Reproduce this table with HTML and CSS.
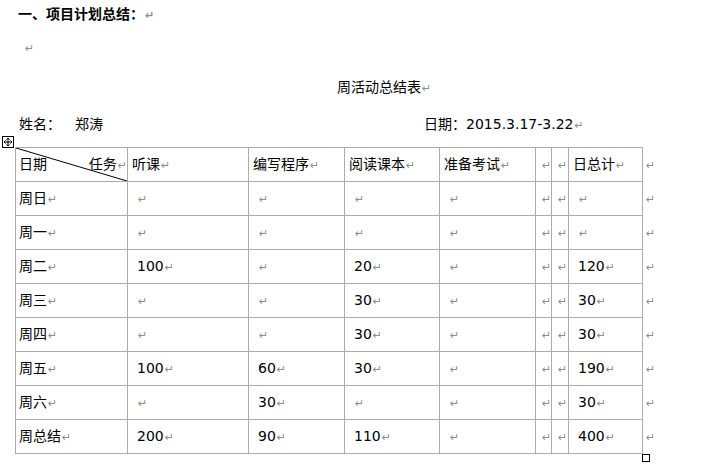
FILE: index.html
```html
<!DOCTYPE html>
<html lang="zh-CN">
<head>
<meta charset="utf-8">
<title>周活动总结表</title>
<link rel="stylesheet" href="styles.css">
</head>
<body>
<div class="page">
  <h1 class="heading">一、项目计划总结：<span class="pm">↵</span></h1>
  <p class="blank"><span class="pm">↵</span></p>
  <p class="caption">周活动总结表<span class="pm">↵</span></p>
  <div class="info">
    <span class="label">姓名：</span><span class="name">郑涛</span><span class="date">日期：2015.3.17-3.22<span class="pm">↵</span></span>
  </div>
  <div class="table-wrap">
    <svg class="move-handle" width="12" height="12" viewBox="0 0 12 12">
      <rect x="0.5" y="0.5" width="11" height="11" fill="#fff" stroke="#000"/>
      <path d="M2 6H10M6 2V10" stroke="#000" stroke-width="1"/>
      <path d="M2 6L3.5 4.5M2 6L3.5 7.5M10 6L8.5 4.5M10 6L8.5 7.5M6 2L4.5 3.5M6 2L7.5 3.5M6 10L4.5 8.5M6 10L7.5 8.5" stroke="#000" stroke-width="1" fill="none"/>
    </svg>
    <table class="grid">
      <colgroup>
        <col class="c1"><col class="c2"><col class="c3"><col class="c4"><col class="c5"><col class="c6"><col class="c7"><col class="c8"><col class="c9">
      </colgroup>
      <tr class="head">
        <td class="diag">
          <svg class="diag-line" viewBox="0 0 100 100" preserveAspectRatio="none"><line x1="0" y1="0" x2="100" y2="100" stroke="#000" stroke-width="1" vector-effect="non-scaling-stroke"/></svg>
          <div class="diag-text"><span>日期</span><span>任务<span class="pm">↵</span></span></div>
        </td>
        <td class="h">听课<span class="pm">↵</span></td>
        <td class="h">编写程序<span class="pm">↵</span></td>
        <td class="h">阅读课本<span class="pm">↵</span></td>
        <td class="h">准备考试<span class="pm">↵</span></td>
        <td class="n"><span class="pm">↵</span></td>
        <td class="n"><span class="pm">↵</span></td>
        <td class="h">日总计<span class="pm">↵</span></td>
        <td class="eor"><span class="pm">↵</span></td>
      </tr>
      <tr><td class="day">周日<span class="pm">↵</span></td><td><span class="pm">↵</span></td><td><span class="pm">↵</span></td><td><span class="pm">↵</span></td><td><span class="pm">↵</span></td><td class="n"><span class="pm">↵</span></td><td class="n"><span class="pm">↵</span></td><td><span class="pm">↵</span></td><td class="eor"><span class="pm">↵</span></td></tr>
      <tr><td class="day">周一<span class="pm">↵</span></td><td><span class="pm">↵</span></td><td><span class="pm">↵</span></td><td><span class="pm">↵</span></td><td><span class="pm">↵</span></td><td class="n"><span class="pm">↵</span></td><td class="n"><span class="pm">↵</span></td><td><span class="pm">↵</span></td><td class="eor"><span class="pm">↵</span></td></tr>
      <tr><td class="day">周二<span class="pm">↵</span></td><td>100<span class="pm">↵</span></td><td><span class="pm">↵</span></td><td>20<span class="pm">↵</span></td><td><span class="pm">↵</span></td><td class="n"><span class="pm">↵</span></td><td class="n"><span class="pm">↵</span></td><td>120<span class="pm">↵</span></td><td class="eor"><span class="pm">↵</span></td></tr>
      <tr><td class="day">周三<span class="pm">↵</span></td><td><span class="pm">↵</span></td><td><span class="pm">↵</span></td><td>30<span class="pm">↵</span></td><td><span class="pm">↵</span></td><td class="n"><span class="pm">↵</span></td><td class="n"><span class="pm">↵</span></td><td>30<span class="pm">↵</span></td><td class="eor"><span class="pm">↵</span></td></tr>
      <tr><td class="day">周四<span class="pm">↵</span></td><td><span class="pm">↵</span></td><td><span class="pm">↵</span></td><td>30<span class="pm">↵</span></td><td><span class="pm">↵</span></td><td class="n"><span class="pm">↵</span></td><td class="n"><span class="pm">↵</span></td><td>30<span class="pm">↵</span></td><td class="eor"><span class="pm">↵</span></td></tr>
      <tr><td class="day">周五<span class="pm">↵</span></td><td>100<span class="pm">↵</span></td><td>60<span class="pm">↵</span></td><td>30<span class="pm">↵</span></td><td><span class="pm">↵</span></td><td class="n"><span class="pm">↵</span></td><td class="n"><span class="pm">↵</span></td><td>190<span class="pm">↵</span></td><td class="eor"><span class="pm">↵</span></td></tr>
      <tr><td class="day">周六<span class="pm">↵</span></td><td><span class="pm">↵</span></td><td>30<span class="pm">↵</span></td><td><span class="pm">↵</span></td><td><span class="pm">↵</span></td><td class="n"><span class="pm">↵</span></td><td class="n"><span class="pm">↵</span></td><td>30<span class="pm">↵</span></td><td class="eor"><span class="pm">↵</span></td></tr>
      <tr><td class="day">周总结<span class="pm">↵</span></td><td>200<span class="pm">↵</span></td><td>90<span class="pm">↵</span></td><td>110<span class="pm">↵</span></td><td><span class="pm">↵</span></td><td class="n"><span class="pm">↵</span></td><td class="n"><span class="pm">↵</span></td><td>400<span class="pm">↵</span></td><td class="eor"><span class="pm">↵</span></td></tr>
    </table>
    <span class="resize-handle"></span>
  </div>
</div>
</body>
</html>
```

FILE: styles.css
```css
* { box-sizing: border-box; }
html, body { margin: 0; padding: 0; background: #fff; }
body {
  font-family: "DejaVu Sans", "Noto Sans CJK SC", sans-serif;
  font-size: 14px;
  line-height: 20px;
  color: #000;
  width: 712px;
  height: 464px;
  overflow: hidden;
}
.page { padding-top: 4px; }
.pm {
  font-family: "DejaVu Sans", sans-serif;
  font-size: 11px;
  color: #8c8c8c;
  margin-left: 1px;
}
.heading {
  margin: 0;
  height: 20px;
  padding-left: 18px;
  font-size: 14px;
  font-weight: bold;
  line-height: 20px;
}
.blank { margin: 13px 0 0; height: 20px; padding-left: 24px; }
.caption { margin: 20px 0 0; height: 20px; padding-left: 337px; }
.info { margin-top: 17px; height: 20px; padding-left: 19px; display: flex; }
.label { width: 56px; }
.name { width: 349px; }
.table-wrap { position: relative; margin-top: 13px; padding-left: 15px; }
.move-handle { position: absolute; left: 2px; top: -11px; }
.resize-handle {
  position: absolute; left: 642px; top: 307px;
  width: 8px; height: 8px; border: 1px solid #000; background: #fff;
}
.grid { border-collapse: collapse; table-layout: fixed; width: 657px; }
.c1 { width: 112px; } .c2 { width: 121px; } .c3 { width: 96px; } .c4 { width: 95px; }
.c5 { width: 96px; } .c6 { width: 16px; } .c7 { width: 17px; } .c8 { width: 74px; } .c9 { width: 30px; }
.grid tr { height: 34px; }
.grid td {
  border: 1px solid #ababab;
  padding: 0 0 0 9px;
  vertical-align: middle;
  white-space: nowrap;
  overflow: visible;
}
.grid td.h { padding-left: 4px; }
.grid td.day { padding-left: 3px; }
.grid td.n { padding-left: 5px; }
.grid td.eor { border: none; padding-left: 2px; }
.grid td.diag { position: relative; padding: 0 0 0 3px; }
.diag-line { position: absolute; left: 0; top: 0; width: 100%; height: 100%; }
.diag-text { display: flex; justify-content: space-between; }
```
